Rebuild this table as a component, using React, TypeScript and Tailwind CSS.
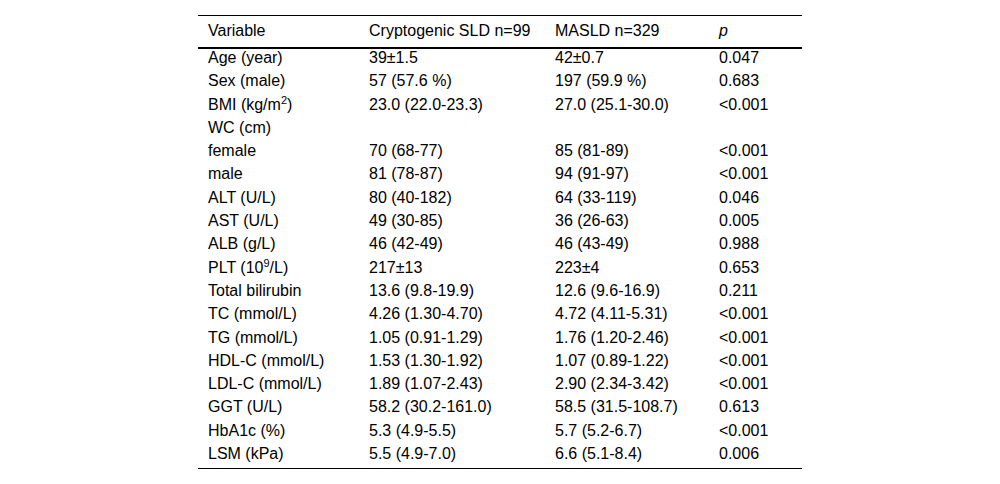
import React from 'react';

interface Row {
  label: React.ReactNode;
  crypto: string;
  masld: string;
  p: string;
}

const Sup = ({ children }: { children: React.ReactNode }) => (
  <sup className="text-[11px] align-baseline relative -top-[6px]">{children}</sup>
);

const rows: Row[] = [
  { label: 'Age (year)', crypto: '39±1.5', masld: '42±0.7', p: '0.047' },
  { label: 'Sex (male)', crypto: '57 (57.6 %)', masld: '197 (59.9 %)', p: '0.683' },
  {
    label: (
      <>
        BMI (kg/m<Sup>2</Sup>)
      </>
    ),
    crypto: '23.0 (22.0-23.3)',
    masld: '27.0 (25.1-30.0)',
    p: '<0.001',
  },
  { label: 'WC (cm)', crypto: '', masld: '', p: '' },
  { label: 'female', crypto: '70 (68-77)', masld: '85 (81-89)', p: '<0.001' },
  { label: 'male', crypto: '81 (78-87)', masld: '94 (91-97)', p: '<0.001' },
  { label: 'ALT (U/L)', crypto: '80 (40-182)', masld: '64 (33-119)', p: '0.046' },
  { label: 'AST (U/L)', crypto: '49 (30-85)', masld: '36 (26-63)', p: '0.005' },
  { label: 'ALB (g/L)', crypto: '46 (42-49)', masld: '46 (43-49)', p: '0.988' },
  {
    label: (
      <>
        PLT (10<Sup>9</Sup>/L)
      </>
    ),
    crypto: '217±13',
    masld: '223±4',
    p: '0.653',
  },
  { label: 'Total bilirubin', crypto: '13.6 (9.8-19.9)', masld: '12.6 (9.6-16.9)', p: '0.211' },
  { label: 'TC (mmol/L)', crypto: '4.26 (1.30-4.70)', masld: '4.72 (4.11-5.31)', p: '<0.001' },
  { label: 'TG (mmol/L)', crypto: '1.05 (0.91-1.29)', masld: '1.76 (1.20-2.46)', p: '<0.001' },
  { label: 'HDL-C (mmol/L)', crypto: '1.53 (1.30-1.92)', masld: '1.07 (0.89-1.22)', p: '<0.001' },
  { label: 'LDL-C (mmol/L)', crypto: '1.89 (1.07-2.43)', masld: '2.90 (2.34-3.42)', p: '<0.001' },
  { label: 'GGT (U/L)', crypto: '58.2 (30.2-161.0)', masld: '58.5 (31.5-108.7)', p: '0.613' },
  { label: 'HbA1c (%)', crypto: '5.3 (4.9-5.5)', masld: '5.7 (5.2-6.7)', p: '<0.001' },
  { label: 'LSM (kPa)', crypto: '5.5 (4.9-7.0)', masld: '6.6 (5.1-8.4)', p: '0.006' },
];

// column widths: 161 / 186 / 164 / 93
const cols = 'grid grid-cols-[161px_186px_164px_93px]';

export default function App() {
  return (
    <div className="w-[1000px] h-[484px] bg-white flex justify-center pt-[15px] font-['Liberation_Sans',Arial,sans-serif] text-[16px] leading-4 text-black">
      <div className="w-[604px] h-fit border-t border-b border-black">
        {/* header */}
        <div className={`${cols} h-[33px] pt-[7px] border-b-2 border-black`}>
          <div className="pl-[10px]">Variable</div>
          <div className="pl-[10px]">Cryptogenic SLD n=99</div>
          <div className="pl-[10px]">MASLD n=329</div>
          <div className="pl-[10px] italic">p</div>
        </div>

        {rows.map((r, i) => (
          <div key={i} className={`${cols} h-[23.3px] pt-[1px] whitespace-nowrap`}>
            <div className="pl-[10px]">{r.label}</div>
            <div className="pl-[10px]">{r.crypto}</div>
            <div className="pl-[10px]">{r.masld}</div>
            <div className="pl-[10px]">{r.p}</div>
          </div>
        ))}
      </div>
    </div>
  );
}
